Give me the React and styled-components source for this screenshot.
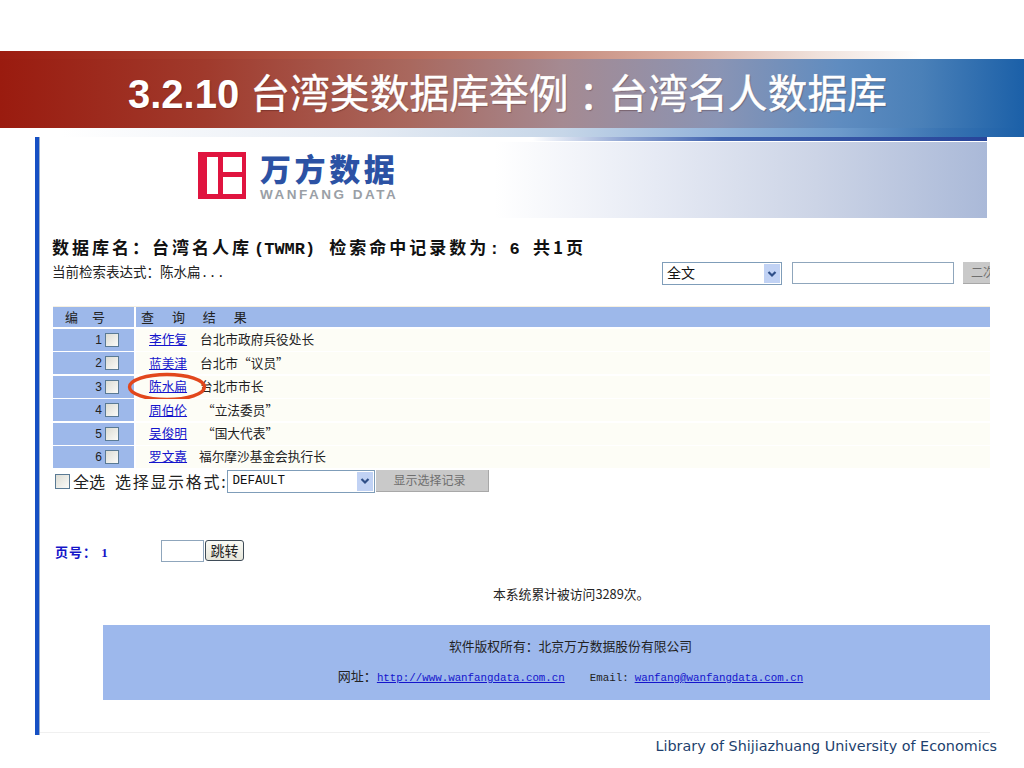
import { Fragment } from 'react'
import styled, { createGlobalStyle } from 'styled-components'

const cjk = '"Noto Sans CJK SC", sans-serif'
const cellBlue = '#9db8ea'

const GlobalStyle = createGlobalStyle`
    html, body {
        margin: 0;
        padding: 0;
        background: #fff;
        overflow: hidden;
    }
    * {
        box-sizing: border-box;
    }
`

const Slide = styled.div`
    width: 1024px;
    height: 768px;
    padding-top: 51px;
    font-family: ${cjk};
`

const TitleBand = styled.div`
    display: flex;
    flex-direction: column;
`

const TopFade = styled.div`
    height: 8px;
    background: linear-gradient(90deg, #9c1c10 0%, #a5402f 20%, #bf7f70 50%, #dcb4a8 68%, #f0e2dc 80%, #fff 90%);
`

const TitleBar = styled.div`
    height: 69px;
    padding-left: 128px;
    display: flex;
    align-items: center;
    background: linear-gradient(90deg, #9a1b0f 0%, #a03a2c 20%, #a9685e 40%, #a58a92 55%, #8a94b4 70%, #5f8cc0 82%, #4a80b8 90%, #1b60a8 100%);
`

const TitleText = styled.h1`
    margin: 0;
    color: #fff;
    font-size: 39.8px;
    font-weight: 400;
    line-height: 48px;
    white-space: nowrap;
    -webkit-text-stroke: 0.4px #fff;
    text-shadow: 1px 1px 1px rgba(60, 20, 20, 0.35);
    font-family: "Liberation Sans", ${cjk};
`

const TitleNumber = styled.span`
    font-size: 40px;
    font-weight: 700;
    -webkit-text-stroke: 0;
`

const TitleColon = styled.span`
    font-family: "Noto Sans CJK TC", sans-serif;
    vertical-align: -4px;
    line-height: 0;
`

const BottomFade = styled.div`
    height: 9px;
    background: linear-gradient(90deg, #fff 6%, #e6ecf4 35%, #c6d6e8 55%, #9ab8dc 68%, #6d9acb 82%, #3a74b2 92%, #1b60a8 100%);
`

const Frame = styled.div`
    width: 955px;
    height: 598px;
    margin-left: 35px;
    border-left: 4px solid #1650c4;
    box-shadow: inset 1px 0 0 #9fb0c8;
    padding-left: 1px;
    overflow: hidden;
`

const Page = styled.div`
    height: 596px;
    border-bottom: 1px solid #f0f0f0;
`

const DarkStrip = styled.div`
    width: 947px;
    height: 4px;
    margin-bottom: 1px;
    background: linear-gradient(90deg, #fff 52%, #8ea4d2 62%, #3f62ae 72%, #28459a 100%);
`

const Banner = styled.div`
    width: 947px;
    height: 76px;
    padding: 10px 0 0 158px;
    display: flex;
    gap: 14px;
    background: linear-gradient(90deg, #fff 48%, #e6eaf4 65%, #ccd4e6 82%, #aab9d8 100%);
`

const LogoWords = styled.div`
    display: flex;
    flex-direction: column;
`

const LogoCn = styled.div`
    font-size: 31px;
    font-weight: 900;
    line-height: 31px;
    letter-spacing: 3.6px;
    color: #2c52a4;
    white-space: nowrap;
`

const LogoEn = styled.div`
    margin-top: 5px;
    font-family: "Liberation Sans", sans-serif;
    font-size: 13.5px;
    font-weight: 700;
    line-height: 14px;
    letter-spacing: 2.5px;
    color: #9a9fa6;
    white-space: nowrap;
`

const SearchSection = styled.div`
    margin-top: 17px;
    padding-left: 12px;
    height: 50px;
    display: flex;
`

const SearchInfo = styled.div`
    width: 610px;
    flex-shrink: 0;
`

const Heading = styled.div`
    height: 24px;
    font-family: ${cjk};
    font-size: 17px;
    font-weight: 700;
    line-height: 24px;
    letter-spacing: 3px;
    color: #111;
    white-space: nowrap;
`

const HeadingLatin = styled.span`
    font-family: "Liberation Mono", monospace;
    letter-spacing: 0;
    margin: 0 ${props => props.$right}px 0 ${props => props.$left}px;
`

const Expression = styled.div`
    margin-top: 2px;
    font-size: 13.5px;
    line-height: 20px;
    color: #222;
    white-space: nowrap;
`

const Dots = styled.span`
    font-family: "Liberation Mono", monospace;
`

const SearchControls = styled.div`
    margin: 27px 0 0 0;
    display: flex;
    height: 23px;
    flex-shrink: 0;
`

const SelectBox = styled.div`
    width: ${props => props.$width}px;
    height: 23px;
    border: 1px solid #7f9db9;
    background: #fff;
    display: flex;
    align-items: center;
    justify-content: space-between;
    padding: 1px 1px 1px 4px;
    font-family: ${props => props.$mono ? '"Liberation Mono", monospace' : cjk};
    font-size: ${props => props.$mono ? 12.5 : 14}px;
    color: #111;
    flex-shrink: 0;
`

const SelectLabel = styled.span`
    margin-bottom: 3px;
`

const SelectArrow = styled.span`
    width: 16px;
    height: 100%;
    background: #c1d2f4;
    display: flex;
    align-items: center;
    justify-content: center;
`

const TextField = styled.input`
    display: block;
    width: ${props => props.$width}px;
    height: ${props => props.$height}px;
    margin-left: ${props => props.$left}px;
    border: 1px solid #8fa6bc;
    background: #fff;
    padding: 0;
    flex-shrink: 0;
`

const GreyButton = styled.div`
    width: ${props => props.$width}px;
    height: 22px;
    margin-left: ${props => props.$left}px;
    background: #c9c9c9;
    border-right: 1px solid #a8a8a8;
    border-bottom: 1px solid #a8a8a8;
    color: #6f6f6f;
    font-size: 12px;
    line-height: 19px;
    padding-left: ${props => props.$pad}px;
    white-space: nowrap;
    flex-shrink: 0;
`

const ResultTable = styled.div`
    margin: 21px 0 0 13px;
    display: grid;
    grid-template-columns: 81px 1fr;
    column-gap: 2px;
    row-gap: 1.4px;
    border-top: 1px solid #f6f0e0;
`

const HeadCell = styled.div`
    height: 20px;
    margin-bottom: 0.6px;
    background: ${cellBlue};
    font-size: 13px;
    line-height: 19px;
    color: #222;
    padding-left: ${props => props.$pad}px;
    word-spacing: ${props => props.$gap}px;
    white-space: nowrap;
`

const NumberCell = styled.div`
    height: 22px;
    background: ${cellBlue};
    display: flex;
    align-items: center;
    justify-content: flex-end;
    gap: 3px;
    padding-right: 15px;
    font-family: "Liberation Sans", sans-serif;
    font-size: 12px;
    color: #222;
`

const Check = styled.span`
    width: ${props => props.$size || 14}px;
    height: ${props => props.$size || 14}px;
    border: 1px solid #5a7a94;
    background: linear-gradient(135deg, #dcdcd4, #fbfbf8);
    flex-shrink: 0;
`

const ResultCell = styled.div`
    height: 22px;
    padding: 0 0 2px 13px;
    background: #fdfdf6;
    display: flex;
    align-items: center;
    font-size: 12.7px;
    color: #222;
    position: relative;
    white-space: nowrap;
`

const NameLink = styled.a`
    width: 38px;
    color: #1414cc;
    text-decoration: underline;
    margin-right: ${props => props.$gap}px;
    flex-shrink: 0;
`

const Circle = styled.svg`
    position: absolute;
    left: -9px;
    top: -4px;
    width: 80px;
    height: 30px;
`

const ActionRow = styled.div`
    margin: 2px 0 0 15px;
    height: 23px;
    display: flex;
    align-items: center;
    white-space: nowrap;
    color: #222;
`

const ActionLabel = styled.span`
    font-size: ${props => props.$size}px;
    margin-left: ${props => props.$left}px;
    line-height: 23px;
    letter-spacing: ${props => props.$space || 0}px;
`

const Pager = styled.div`
    margin: 47px 0 0 15px;
    height: 22px;
    display: flex;
    align-items: center;
`

const PageLabel = styled.span`
    width: 106px;
    padding-top: 2px;
    color: #1414c8;
    font-family: "Liberation Serif", ${cjk};
    font-size: 13px;
    font-weight: 700;
    letter-spacing: 1px;
    white-space: nowrap;
`

const JumpButton = styled.div`
    width: 39px;
    height: 21px;
    margin-left: 1px;
    border: 1px solid #3f4c58;
    border-radius: 3px;
    background: linear-gradient(#fbfbf6, #e6e6da);
    font-size: 14px;
    line-height: 18px;
    text-align: center;
    color: #222;
`

const Visits = styled.div`
    margin: 25px 0 0 453px;
    height: 14px;
    font-size: 12.8px;
    line-height: 14px;
    color: #222;
    white-space: nowrap;
`

const FooterPanel = styled.div`
    margin: 24px 0 0 63px;
    height: 75px;
    background: #9db8ec;
    padding: 11px 0 0 48px;
    display: flex;
    flex-direction: column;
    align-items: center;
    gap: 10px;
    color: #222;
    white-space: nowrap;
`

const FooterLine = styled.div`
    height: 20px;
    font-size: ${props => props.$size}px;
    line-height: 20px;
`

const MonoLink = styled.a`
    font-family: "Liberation Mono", monospace;
    font-size: 10.8px;
    color: #1414cc;
    text-decoration: underline;
`

const MonoText = styled.span`
    font-family: "Liberation Mono", monospace;
    font-size: 10.8px;
    margin: 0 6px 0 25px;
`

const Credit = styled.div`
    margin-top: 1px;
    padding-right: 27px;
    text-align: right;
    font-family: "DejaVu Sans", sans-serif;
    font-size: 14.35px;
    line-height: 20px;
    color: #1d3f6e;
    white-space: nowrap;
`

const results = [
    { id: 1, name: '李作复', note: '台北市政府兵役处长', gap: 13 },
    { id: 2, name: '蓝美津', note: '台北市“议员”', gap: 13 },
    { id: 3, name: '陈水扁', note: '台北市市长', gap: 13, circled: true },
    { id: 4, name: '周伯伦', note: '“立法委员”', gap: 15 },
    { id: 5, name: '吴俊明', note: '“国大代表”', gap: 15 },
    { id: 6, name: '罗文嘉', note: '福尔摩沙基金会执行长', gap: 12 },
]

const Chevron = () => (
    <svg width="10" height="8" viewBox="0 0 10 8">
        <path d="M1.5 2 L5 5.5 L8.5 2" fill="none" stroke="#2f4f88" strokeWidth="2.2" />
    </svg>
)

const LogoMark = () => (
    <svg width="48" height="47" viewBox="0 0 48 47" style={{ flexShrink: 0 }}>
        <rect width="48" height="47" fill="#e0143f" />
        <rect x="9" y="5" width="11" height="37" fill="#fff" />
        <rect x="25" y="5" width="19" height="15" fill="#fff" />
        <rect x="25" y="25" width="19" height="17" fill="#fff" />
    </svg>
)

const App = () => {
    return (
        <Slide>
            <GlobalStyle />
            <TitleBand>
                <TopFade />
                <TitleBar>
                    <TitleText><TitleNumber>3.2.10</TitleNumber> 台湾类数据库举例<TitleColon>：</TitleColon>台湾名人数据库</TitleText>
                </TitleBar>
                <BottomFade />
            </TitleBand>
            <Frame>
                <Page>
                    <DarkStrip />
                    <Banner>
                        <LogoMark />
                        <LogoWords>
                            <LogoCn>万方数据</LogoCn>
                            <LogoEn>WANFANG DATA</LogoEn>
                        </LogoWords>
                    </Banner>
                    <SearchSection>
                        <SearchInfo>
                            <Heading>
                                数据库名：台湾名人库<HeadingLatin $left={2} $right={14}>(TWMR)</HeadingLatin>检索命中记录数为<HeadingLatin $left={0} $right={3}>: 6 </HeadingLatin>共1页
                            </Heading>
                            <Expression>当前检索表达式：陈水扁<Dots>...</Dots></Expression>
                        </SearchInfo>
                        <SearchControls>
                            <SelectBox $width={120}><SelectLabel>全文</SelectLabel><SelectArrow><Chevron /></SelectArrow></SelectBox>
                            <TextField $width={162} $height={22} $left={10} />
                            <GreyButton $width={60} $left={9} $pad={8}>二次检索</GreyButton>
                        </SearchControls>
                    </SearchSection>
                    <ResultTable>
                        <HeadCell $pad={12} $gap={11}>编 号</HeadCell>
                        <HeadCell $pad={5} $gap={15}>查 询 结 果</HeadCell>
                        {results.map(row => (
                            <Fragment key={row.id}>
                                <NumberCell>{row.id}<Check /></NumberCell>
                                <ResultCell>
                                    <NameLink $gap={row.gap}>{row.name}</NameLink>
                                    {row.note}
                                    {row.circled && (
                                        <Circle viewBox="0 0 80 30">
                                            <ellipse cx="40" cy="15" rx="37.5" ry="12.5" fill="none" stroke="#e2471c" strokeWidth="3.4" />
                                        </Circle>
                                    )}
                                </ResultCell>
                            </Fragment>
                        ))}
                    </ResultTable>
                    <ActionRow>
                        <Check $size={15} />
                        <ActionLabel $size={16} $left={3}>全选</ActionLabel>
                        <ActionLabel $size={16} $left={10} $space={1.7}>选择显示格式:</ActionLabel>
                        <SelectBox $width={148} $mono>DEFAULT<SelectArrow><Chevron /></SelectArrow></SelectBox>
                        <GreyButton $width={113} $left={1} $pad={17}>显示选择记录</GreyButton>
                    </ActionRow>
                    <Pager>
                        <PageLabel>页号： 1</PageLabel>
                        <TextField $width={43} $height={22} $left={0} />
                        <JumpButton>跳转</JumpButton>
                    </Pager>
                    <Visits>本系统累计被访问3289次。</Visits>
                    <FooterPanel>
                        <FooterLine $size={12.8}>软件版权所有：北京万方数据股份有限公司</FooterLine>
                        <FooterLine $size={13}>
                            网址：<MonoLink>http://www.wanfangdata.com.cn</MonoLink>
                            <MonoText>Email:</MonoText>
                            <MonoLink>wanfang@wanfangdata.com.cn</MonoLink>
                        </FooterLine>
                    </FooterPanel>
                </Page>
            </Frame>
            <Credit>Library of Shijiazhuang University of Economics</Credit>
        </Slide>
    )
}

export default App
